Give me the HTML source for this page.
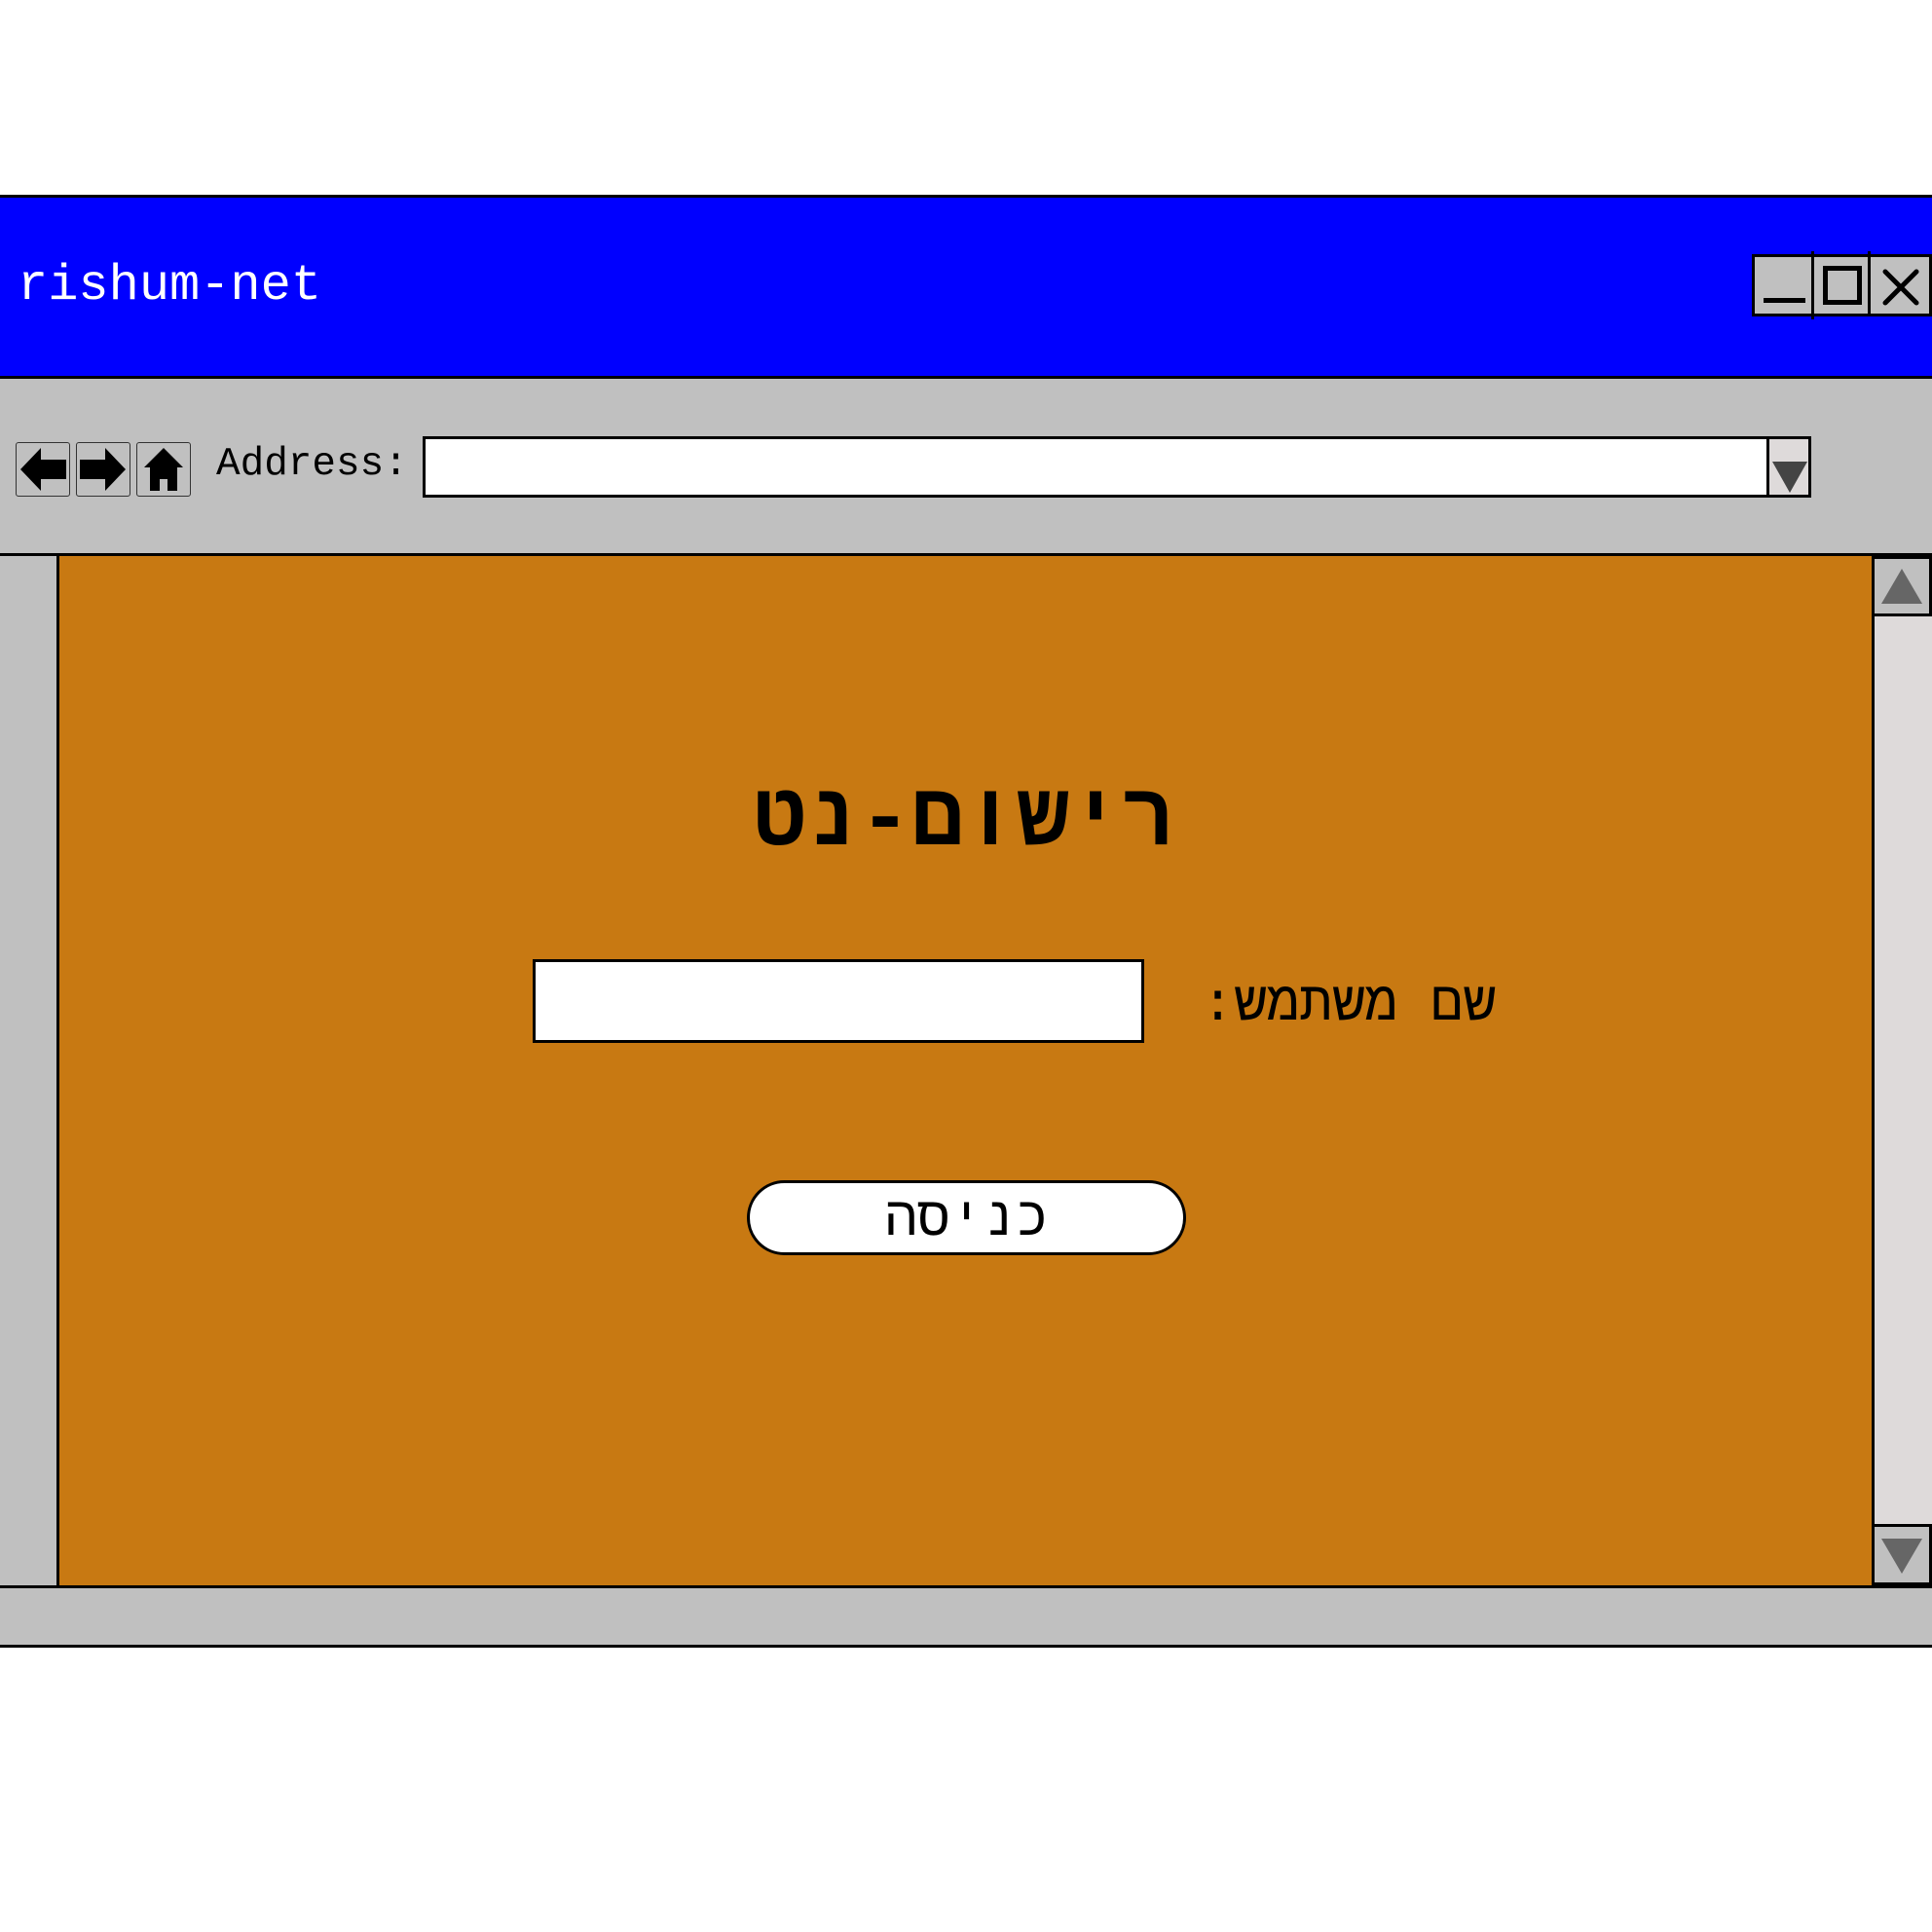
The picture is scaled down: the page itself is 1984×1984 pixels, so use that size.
<!DOCTYPE html>
<html><head><meta charset="utf-8"><style>
body{margin:0;width:1984px;height:1984px;background:#fff;position:relative;overflow:hidden;font-family:"Liberation Mono",monospace}
div{position:absolute;box-sizing:border-box}
</style></head><body>
<div style="left:0;top:200px;width:1984px;height:189px;background:#0000ff;border-top:3px solid #000;border-bottom:3px solid #000"></div>
<div style="left:18px;top:264px;color:#fff;font-size:52px;line-height:60px">rishum-net</div>
<div style="left:1799px;top:261px;width:185px;height:64px;background:#c0c0c0;border:3px solid #000"></div>
<div style="left:1860px;top:258px;width:3px;height:70px;background:#000"></div>
<div style="left:1918px;top:258px;width:3px;height:67px;background:#000"></div>
<div style="left:1811px;top:306px;width:43px;height:5px;background:#000"></div>
<div style="left:1872px;top:273px;width:40px;height:40px;border:5px solid #000"></div>
<svg style="position:absolute;left:1930px;top:275px" width="44" height="40"><path d="M6 4 L38 36 M38 4 L6 36" stroke="#000" stroke-width="5" stroke-linecap="round"/></svg>
<div style="left:0;top:389px;width:1984px;height:182px;background:#c0c0c0;border-bottom:3px solid #000"></div>
<div style="left:16px;top:454px;width:56px;height:56px;background:#c0c0c0;border:1.5px solid #333;border-radius:3px"></div>
<div style="left:78px;top:454px;width:56px;height:56px;background:#c0c0c0;border:1.5px solid #333;border-radius:3px"></div>
<div style="left:140px;top:454px;width:56px;height:56px;background:#c0c0c0;border:1.5px solid #333;border-radius:3px"></div>
<svg style="position:absolute;left:16px;top:454px" width="180" height="56">
<path d="M5 28 L26 6 L26 18 L52 18 L52 38 L26 38 L26 50 Z" fill="#000"/>
<path d="M113 28 L92 6 L92 18 L66 18 L66 38 L92 38 L92 50 Z" fill="#000"/>
<path d="M152 6 L172 26 L166 26 L166 50 L156 50 L156 38 L148 38 L148 50 L138 50 L138 26 L132 26 Z" fill="#000"/>
</svg>
<div style="left:222px;top:453px;font-size:41px;line-height:48px;color:#000">Address:</div>
<div style="left:434px;top:448px;width:1426px;height:63px;background:#fff;border:3px solid #000"></div>
<div style="left:1814px;top:448px;width:46px;height:63px;background:#dedada;border:3px solid #000"></div>
<svg style="position:absolute;left:1818px;top:472px" width="40" height="36"><path d="M2 2 L38 2 L20 34 Z" fill="#444"/></svg>
<div style="left:0;top:571px;width:61px;height:1057px;background:#c0c0c0;border-right:3px solid #000"></div>
<div style="left:61px;top:571px;width:1862px;height:1057px;background:#c87912"></div>
<div style="left:1922px;top:571px;width:62px;height:1057px;background:#dedada;border-left:3px solid #000"></div>
<div style="left:1922px;top:571px;width:62px;height:62px;background:#c0c0c0;border:3px solid #000"></div>
<svg style="position:absolute;left:1930px;top:582px" width="46" height="40"><path d="M23 2 L44 38 L2 38 Z" fill="#666"/></svg>
<div style="left:1922px;top:1565px;width:62px;height:63px;background:#c0c0c0;border:3px solid #000"></div>
<svg style="position:absolute;left:1930px;top:1578px" width="46" height="40"><path d="M2 2 L44 2 L23 38 Z" fill="#666"/></svg>
<div style="left:0;top:1628px;width:1984px;height:64px;background:#c0c0c0;border-top:3px solid #000;border-bottom:3px solid #000"></div>
<div style="left:700px;top:784px;width:580px;text-align:center;font-size:90px;font-weight:bold;line-height:120px;direction:rtl;font-family:'Liberation Mono','DejaVu Sans Mono',monospace">רישום-נט</div>
<div style="left:547px;top:985px;width:628px;height:86px;background:#fff;border:3px solid #000"></div>
<div style="left:1220px;top:997px;width:330px;text-align:center;font-size:56px;line-height:70px;direction:rtl;font-family:'Liberation Mono','DejaVu Sans Mono',monospace">שם משתמש:</div>
<div style="left:767px;top:1212px;width:451px;height:77px;background:#fff;border:3px solid #000;border-radius:40px;text-align:center;font-size:56px;line-height:76px;direction:rtl;font-family:'Liberation Mono','DejaVu Sans Mono',monospace">כניסה</div>
</body></html>
